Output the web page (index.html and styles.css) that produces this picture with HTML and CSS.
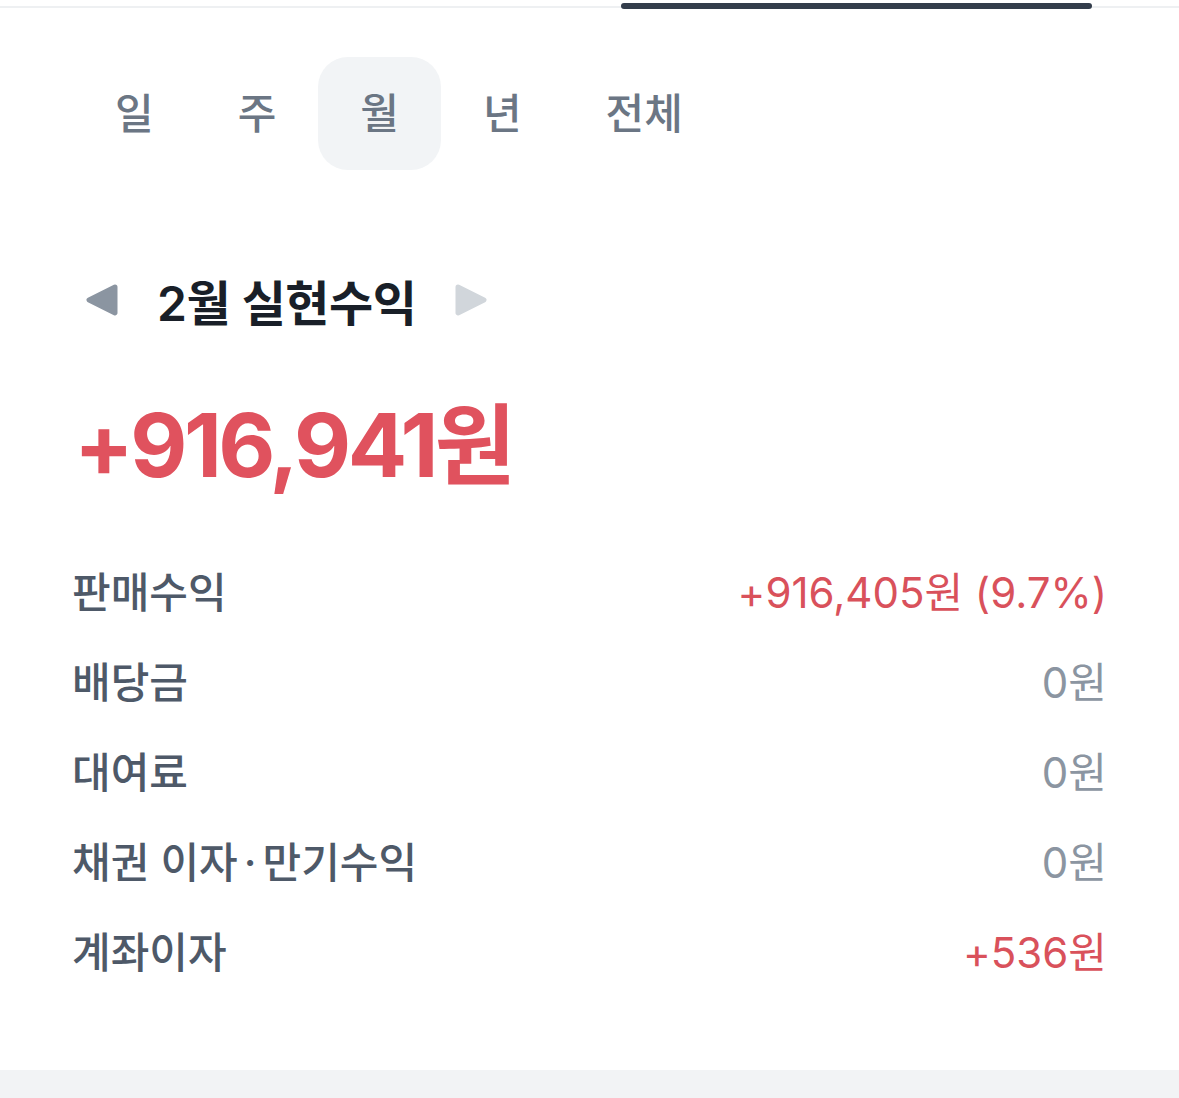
FILE: index.html
```html
<!DOCTYPE html>
<html lang="ko">
<head>
<meta charset="utf-8">
<link rel="stylesheet" href="styles.css">
</head>
<body>
<div class="topbar"><div class="indicator"></div></div>
<div class="tabs">
  <div class="tab">일</div>
  <div class="tab">주</div>
  <div class="tab active">월</div>
  <div class="tab">년</div>
  <div class="tab">전체</div>
</div>
<div class="period">
  <svg class="arrow" width="36" height="36" viewBox="0 0 36 36"><path d="M31 5 L5 18 L31 31 Z" fill="#8b95a1" stroke="#8b95a1" stroke-width="5" stroke-linejoin="round"/></svg>
  <div class="title">2월 실현수익</div>
  <svg class="arrow" width="36" height="36" viewBox="0 0 36 36"><path d="M5 5 L31 18 L5 31 Z" fill="#d1d6db" stroke="#d1d6db" stroke-width="5" stroke-linejoin="round"/></svg>
</div>
<div class="total">+916,941원</div>
<div class="rows">
  <div class="row"><span class="label">판매수익</span><span class="value red">+916,405원 (9.7%)</span></div>
  <div class="row"><span class="label">배당금</span><span class="value gray">0원</span></div>
  <div class="row"><span class="label">대여료</span><span class="value gray">0원</span></div>
  <div class="row"><span class="label">채권 이자<span class="dot">·</span>만기수익</span><span class="value gray">0원</span></div>
  <div class="row"><span class="label">계좌이자</span><span class="value red">+536원</span></div>
</div>
<div class="footer-band"></div>
</body>
</html>
```
FILE: styles.css
```css
html, body {
  margin: 0;
  padding: 0;
  background: #ffffff;
  font-family: Inter, "Noto Sans CJK KR", sans-serif;
}
body {
  width: 1179px;
  height: 1098px;
  overflow: hidden;
  display: flex;
  flex-direction: column;
}
.topbar {
  height: 13px;
  background: linear-gradient(#eef0f2, #eef0f2) no-repeat 0 6px / 100% 2px;
  display: flex;
}
.indicator {
  margin: 3px 0 0 621px;
  width: 471px;
  height: 6px;
  border-radius: 3px;
  background: #333d4b;
}
.tabs {
  margin-top: 44px;
  padding-left: 73px;
  display: flex;
  height: 113px;
}
.tab {
  padding: 0 42px;
  font-size: 42px;
  font-weight: 500;
  line-height: 113px;
  color: #6b7684;
  border-radius: 30px;
}
.tab.active {
  background: #f2f4f6;
}
.period {
  margin-top: 100px;
  height: 60px;
  display: flex;
  align-items: center;
  padding-left: 84px;
}
.title {
  margin: 0 37px 0 37px;
  font-size: 48px;
  font-weight: 600;
  color: #191f28;
  letter-spacing: -0.5px;
}
.total {
  margin-top: 62px;
  padding-left: 74px;
  font-size: 88px;
  font-weight: 700;
  color: #e0525e;
  line-height: 106px;
  letter-spacing: -3.5px;
}
.rows {
  margin-top: 46px;
  padding: 0 72px 0 72px;
  display: flex;
  flex-direction: column;
}
.row {
  height: 90px;
  display: flex;
  align-items: center;
  justify-content: space-between;
  font-size: 42px;
}
.label {
  color: #4e5968;
  font-weight: 500;
}
.dot {
  margin: 0 6px;
}
.value.red { color: #d9515b; }
.value.gray { color: #8b95a1; }
.footer-band {
  margin-top: auto;
  height: 28px;
  background: #f2f3f5;
}
```
